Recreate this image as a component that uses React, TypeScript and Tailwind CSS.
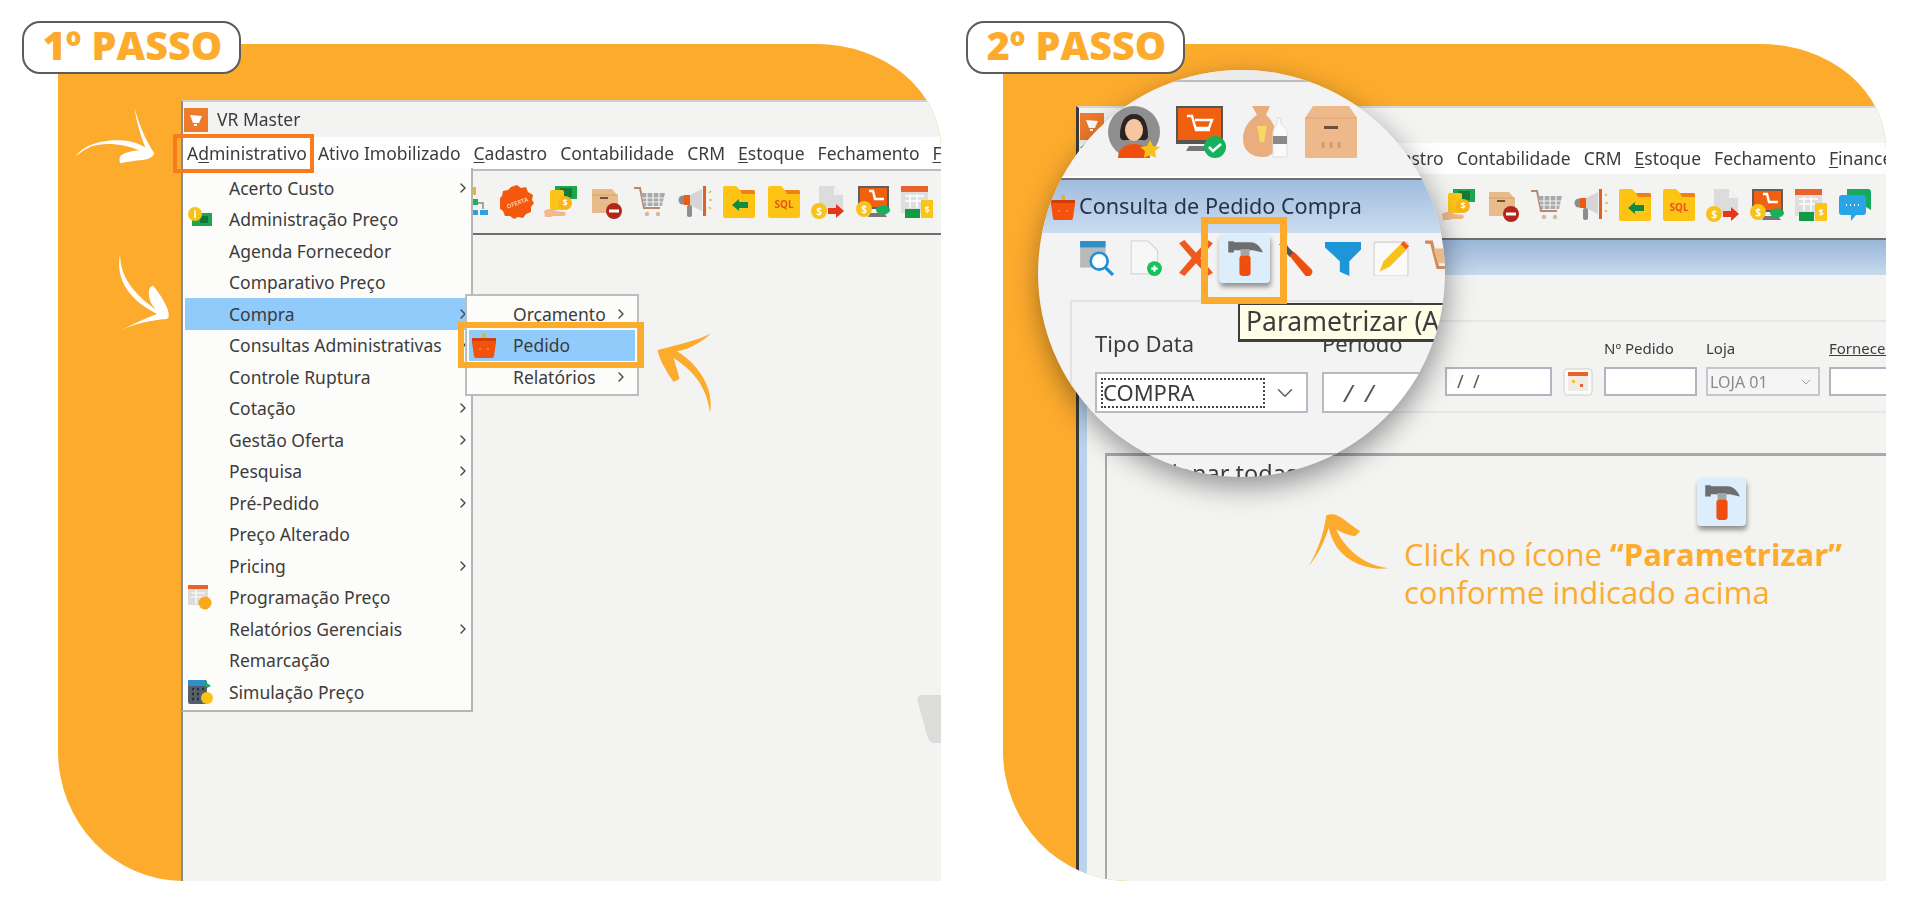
import { ChevronDown, ChevronRight } from "lucide-react";
import type { ReactNode } from "react";

const ORANGE = "#fcab2d";

function Ic({ children, size = 34, box = 34 }: { children: ReactNode; size?: number; box?: number }) {
  return (
    <svg width={size} height={size} viewBox={`0 0 ${box} ${box}`} className="shrink-0 blur-[0.5px]">
      {children}
    </svg>
  );
}

// toolbar icons, shared by both windows
const Network = () => (
  <Ic>
    <rect x="12" y="2" width="9" height="8" fill="#fbb11f" />
    <path d="M17 10v8M6 24v-6h22v6" stroke="#8a8a8a" strokeWidth="1.5" fill="none" />
    <rect x="11" y="14" width="12" height="6" fill="#19b45a" />
    <rect x="1" y="25" width="10" height="5" fill="#2f9fe0" />
    <rect x="13" y="25" width="10" height="5" fill="#2f9fe0" />
    <rect x="25" y="25" width="8" height="5" fill="#2f9fe0" />
  </Ic>
);
const Oferta = () => (
  <Ic>
    <path d="M17 0l4 3 5-1 2 5 5 3-1 5 2 3-3 4 0 5-5 2-3 4-5-1-4 2-4-3-5 0-2-5-4-3 1-5-1-4 3-3 1-5 5-1 3-3z" fill="#f3580f" />
    <text x="17" y="20" textAnchor="middle" fontSize="6" fill="#ffc9a0" transform="rotate(-20 17 17)" fontFamily="Noto Sans, sans-serif" fontWeight="700">OFERTA</text>
  </Ic>
);
const MoneyHand = () => (
  <Ic>
    <rect x="11" y="1" width="22" height="13" fill="#1ea54d" />
    <rect x="16" y="3" width="12" height="9" fill="#137a37" />
    <rect x="6" y="5" width="14" height="20" rx="2" fill="#fcc419" />
    <circle cx="21" cy="18" r="7" fill="#f9b41a" />
    <text x="21" y="21" textAnchor="middle" fontSize="9" fill="#fff" fontFamily="Noto Sans, sans-serif" fontWeight="700">$</text>
    <path d="M0 26c5-3 9-2 12 0l9 1c2 2 0 4-2 4H9l-2 1H1z" fill="#f2b98b" />
  </Ic>
);
const BoxMinus = () => (
  <Ic>
    <path d="M3 4h20l6 7v17H3z" fill="#e9bb8b" />
    <path d="M3 10h26" stroke="#d5a171" strokeWidth="1" />
    <rect x="11" y="12" width="8" height="2" fill="#6b5140" />
    <circle cx="25" cy="26" r="8" fill="#b3261a" />
    <rect x="20" y="24.5" width="10" height="3" fill="#fff" />
  </Ic>
);
const Cart = () => (
  <Ic>
    <path d="M1 3h6l4 20h16" stroke="#b9886a" strokeWidth="2" fill="none" />
    <path d="M8 8h24l-3 13H11z" fill="#a9a9a9" />
    <path d="M14 8v13M20 8v13M26 8v13M9 13h22M10 17h20" stroke="#f3f3f3" strokeWidth="1.2" />
    <circle cx="14" cy="29" r="2.2" fill="#d6b8a0" />
    <circle cx="25" cy="29" r="2.2" fill="#d6b8a0" />
  </Ic>
);
const Megaphone = () => (
  <Ic>
    <circle cx="5" cy="15" r="4.5" fill="#8d8d8d" />
    <path d="M6 10h6v10H6z" fill="#ef5a12" />
    <path d="M12 10l12-6v22l-12-6z" fill="#d5d5d5" />
    <rect x="9" y="20" width="5" height="12" rx="2" fill="#8d8d8d" />
    <rect x="25" y="1" width="3" height="30" fill="#d9622a" />
    <path d="M31 8l2-2M31 15h3M31 22l2 2" stroke="#f7b731" strokeWidth="1.6" />
  </Ic>
);
function Folder({ children }: { children: ReactNode }) {
  return (
    <Ic>
      <path d="M1 3a2 2 0 012-2h11l4 4h13a2 2 0 012 2v24a2 2 0 01-2 2H3a2 2 0 01-2-2z" fill="#fdc414" />
      <path d="M18 5h13a2 2 0 012 2v2H20z" fill="#ef7f1a" />
      {children}
    </Ic>
  );
}
const FolderArrow = () => (
  <Folder>
    <path d="M10 20l7-6v3h9v6h-9v3z" fill="#118a43" />
  </Folder>
);
const FolderSql = () => (
  <Folder>
    <text x="17" y="23" textAnchor="middle" fontSize="10" fill="#e8541a" fontFamily="Noto Sans, sans-serif" fontWeight="700">SQL</text>
  </Folder>
);
const DocMoney = () => (
  <Ic>
    <path d="M8 1h15l9 9v16H8z" fill="#dcdcdc" />
    <path d="M23 1v9h9z" fill="#f1f1f1" />
    <circle cx="8" cy="26" r="8" fill="#f9c21a" />
    <text x="8" y="30" textAnchor="middle" fontSize="10" fill="#fff" fontFamily="Noto Sans, sans-serif" fontWeight="700">$</text>
    <path d="M17 23h8v-4l8 7-8 7v-4h-8z" fill="#e4361b" />
  </Ic>
);
const MonitorMoney = () => (
  <Ic>
    <rect x="2" y="1" width="31" height="23" fill="#5f5f5f" />
    <rect x="4" y="3" width="27" height="19" fill="#f0600f" />
    <path d="M13 6h4l2 8h9" stroke="#fff" strokeWidth="2.4" fill="none" />
    <path d="M14 28h14l3 4H12z" fill="#777" />
    <circle cx="8" cy="24" r="8" fill="#f9c21a" />
    <text x="8" y="28" textAnchor="middle" fontSize="10" fill="#fff" fontFamily="Noto Sans, sans-serif" fontWeight="700">$</text>
    <ellipse cx="27" cy="25" rx="7" ry="4.5" fill="#14b25a" />
  </Ic>
);
const CalendarMoney = () => (
  <Ic>
    <rect x="1" y="1" width="27" height="27" fill="#dedede" />
    <rect x="1" y="1" width="27" height="6" fill="#e8622a" />
    <path d="M5 11h19M5 16h19M10 9v14M17 9v14" stroke="#fff" strokeWidth="1.5" />
    <rect x="5" y="24" width="15" height="9" fill="#129a45" />
    <rect x="21" y="15" width="12" height="18" fill="#fcc419" />
    <text x="27" y="28" textAnchor="middle" fontSize="9" fill="#fff" fontFamily="Noto Sans, sans-serif" fontWeight="700">$</text>
  </Ic>
);
const Chat = () => (
  <Ic>
    <path d="M9 1h21a3 3 0 013 3v18l-5-3H9z" fill="#16a960" />
    <path d="M1 10a3 3 0 013-3h21a3 3 0 013 3v14a3 3 0 01-3 3H18l-5 6v-6H4a3 3 0 01-3-3z" fill="#27a5e6" />
    <path d="M8 17h1M12 17h1M16 17h1M20 17h1" stroke="#fff" strokeWidth="2.2" />
  </Ic>
);

// window icon, orange tile with a white cart
const VrLogo = ({ green = false }: { green?: boolean }) => (
  <svg width="24" height={green ? 35 : 24} viewBox={green ? "0 0 24 35" : "0 0 24 24"} className="shrink-0 blur-[0.4px]">
    <rect width="24" height={green ? 27 : 24} fill="#ee7a2c" />
    <path d="M6 7l12 1-3 7h-6z" fill="#fff" />
    <rect x="10" y="16" width="3" height="2" fill="#fff" />
    {green && <path d="M0 35l14-13v13z" fill="#1c9a4d" />}
  </svg>
);
const Basket = ({ size = 26 }: { size?: number }) => (
  <Ic size={size} box={26}>
    <rect x="11" y="1" width="4" height="5" fill="#e3b23a" />
    <path d="M1 6h24v4l-2 14a2 2 0 01-2 2H5a2 2 0 01-2-2L1 10z" fill="#f4510c" />
    <path d="M1 6h24v3H1z" fill="#cf3e08" />
    <circle cx="9" cy="17" r="1" fill="#ff8a50" />
    <circle cx="17" cy="17" r="1" fill="#ff8a50" />
  </Ic>
);
const CoinBill = () => (
  <Ic size={26} box={26}>
    <rect x="5" y="7" width="20" height="13" fill="#1fa54c" />
    <rect x="13" y="10" width="8" height="7" fill="#0f7a35" />
    <circle cx="8" cy="8" r="7" fill="#f9c21a" />
    <rect x="7" y="4" width="2" height="8" fill="#fff3c0" />
  </Ic>
);
const CalendarCoin = () => (
  <Ic size={26} box={26}>
    <rect x="1" y="1" width="20" height="20" fill="#dcdcdc" />
    <rect x="1" y="1" width="20" height="4" fill="#e8622a" />
    <path d="M4 9h14M4 13h14M9 6v14" stroke="#fff" strokeWidth="1.2" />
    <circle cx="18" cy="19" r="6.5" fill="#f9a81a" />
  </Ic>
);
const CalcCoin = () => (
  <Ic size={26} box={26}>
    <rect x="1" y="1" width="19" height="24" rx="2" fill="#55606a" />
    <rect x="1" y="1" width="17" height="6" fill="#2e8fc8" />
    <path d="M5 10h2M10 10h2M15 10h2M5 15h2M10 15h2M5 20h2M10 20h2" stroke="#2a2f35" strokeWidth="2.4" />
    <path d="M16 1l8 6-4 2z" fill="#16b35d" />
    <circle cx="20" cy="19" r="6" fill="#f9c21a" />
  </Ic>
);

const HammerGlyph = ({ size }: { size: number }) => (
  <Ic size={size} box={34}>
    <path d="M2 2h5v1h15c5 0 9 4 11 9l-9-2H7v2H2z" fill="#6e6e6e" />
    <rect x="13" y="9" width="8" height="7" fill="#a5a5a5" />
    <rect x="12" y="15" width="10" height="18" rx="2.5" fill="#ee4f10" />
  </Ic>
);
const HammerBtn = ({ w, h, glyph }: { w: string; h: string; glyph: number }) => (
  <div className={`flex ${w} ${h} shrink-0 items-center justify-center rounded-[4px] bg-[#dceefb] shadow-[1px_4px_5px_rgba(0,0,0,0.4)]`}>
    <HammerGlyph size={glyph} />
  </div>
);

const MENU: { label: string; arrow?: boolean; icon?: ReactNode; active?: boolean }[] = [
  { label: "Acerto Custo", arrow: true },
  { label: "Administração Preço", icon: <CoinBill /> },
  { label: "Agenda Fornecedor" },
  { label: "Comparativo Preço" },
  { label: "Compra", arrow: true, active: true },
  { label: "Consultas Administrativas", arrow: true },
  { label: "Controle Ruptura" },
  { label: "Cotação", arrow: true },
  { label: "Gestão Oferta", arrow: true },
  { label: "Pesquisa", arrow: true },
  { label: "Pré-Pedido", arrow: true },
  { label: "Preço Alterado" },
  { label: "Pricing", arrow: true },
  { label: "Programação Preço", icon: <CalendarCoin /> },
  { label: "Relatórios Gerenciais", arrow: true },
  { label: "Remarcação" },
  { label: "Simulação Preço", icon: <CalcCoin /> },
];

function U({ first, rest }: { first: string; rest: string }) {
  return (
    <span>
      <span className="underline underline-offset-2">{first}</span>
      {rest}
    </span>
  );
}

function Badge({ text, className }: { text: string; className: string }) {
  return (
    <div className={`absolute top-[-23px] z-30 flex h-[53px] w-[219px] items-center justify-center rounded-[18px] border-2 border-[#5c5c5c] bg-white pb-[4px] pl-[2px] font-['Open_Sans',sans-serif] text-[39.5px] font-extrabold text-[#fcab2d] ${className}`}>
      {text}
    </div>
  );
}

function Arrow({ box, w, h, d, fill, className }: { box: string; w: number; h: number; d: string; fill: string; className: string }) {
  return (
    <svg width={w} height={h} viewBox={box} className={`absolute z-20 ${className}`}>
      <path d={d} fill={fill} />
    </svg>
  );
}

function StepOne() {
  return (
    <div className="relative h-[837px] w-[883px] shrink-0">
      <Badge text="1º PASSO" className="left-[-36px]" />
      <Arrow box="40 15 250 180" w={83} h={60} fill="#fff" className="left-[15px] top-[61px]"
        d="M48 170 C70 135 130 115 200 122 C225 125 245 135 258 142 C245 110 232 70 225 22 C238 70 258 120 285 160 C280 172 270 178 250 180 C225 182 200 186 182 190 C178 180 180 170 186 165 C205 155 225 152 240 152 C200 132 130 125 95 140 C75 148 60 160 48 170 Z" />
      <Arrow box="165 455 170 245" w={57} h={82} fill="#fff" className="left-[57px] top-[208px]"
        d="M180 462 C168 520 190 590 290 640 C250 655 210 675 175 692 C215 672 270 658 320 655 C328 650 326 640 322 625 C312 600 295 575 278 555 C268 560 263 568 268 595 C272 610 280 620 288 628 C235 590 180 540 180 462 Z" />
      <div className="flex h-full flex-col overflow-hidden rounded-tr-[125px_105px] rounded-bl-[125px_130px] bg-[#fcab2d] pl-[123px] pt-[56px]">
        <div className="relative flex min-h-0 flex-1 flex-col border-l-2 border-t-2 border-[#8b8b8b] border-t-[#cfcfcf] bg-[#f3f3f2] font-['Noto_Sans',sans-serif] text-[17.5px] text-[#3c3c3c] blur-[0.3px]">
          <div className="flex h-[35px] items-center gap-[9px] pl-[1px]">
            <VrLogo />
            <span>VR Master</span>
          </div>
          <div className="flex h-[32px] items-center gap-[13px] whitespace-nowrap bg-[#fefefe] pl-[4px]">
            <span>A<U first="d" rest="ministrativo" /></span>
            <span className="ml-[-2px]">Ativo Imobilizado</span>
            <U first="C" rest="adastro" />
            <span>Contabilidade</span>
            <span>CRM</span>
            <U first="E" rest="stoque" />
            <span>Fechamento</span>
            <U first="F" rest="inanceiro" />
          </div>
          <div className="flex h-[66px] items-center gap-[10.5px] border-b-2 border-t-2 border-b-[#6f6f6f] border-t-[#bdbdbd] pl-[272px]">
            <Network />
            <Oferta />
            <MoneyHand />
            <BoxMinus />
            <Cart />
            <Megaphone />
            <FolderArrow />
            <FolderSql />
            <DocMoney />
            <MonitorMoney />
            <CalendarMoney />
          </div>
          <div className="flex-1" />

          {/* menu aberto */}
          <div className="absolute left-[-2px] top-[66px] z-10 w-[292px] border-b-2 border-l-2 border-r-2 border-[#b5b5b5] border-l-[#8b8b8b] bg-[#fcfcfb] pb-[2px] pl-[2px] pr-[2px] pt-[4px]">
            {MENU.map((m) => (
              <div key={m.label} className={`flex h-[31.5px] items-center ${m.active ? "bg-[#90cbfb]" : ""}`}>
                <div className="flex w-[44px] shrink-0 items-center pl-[2px]">{m.icon}</div>
                <span className="flex-1 whitespace-nowrap">{m.label}</span>
                {m.arrow && <ChevronRight size={16} strokeWidth={2} className="mr-[-2px] text-[#444]" />}
              </div>
            ))}
          </div>
          <div className="absolute left-[282px] top-[192px] z-10 w-[174px] border-2 border-[#bdbdbd] bg-[#fcfcfb] pb-[1px] pt-[2px]">
            <div className="flex h-[31.5px] items-center pl-[46px] pr-[8px]">
              <span className="flex-1">Orçamento</span>
              <ChevronRight size={16} strokeWidth={2} className="text-[#444]" />
            </div>
            <div className="mx-[2px] flex h-[31.5px] items-center bg-[#90cbfb] pl-[44px]">
              <span>Pedido</span>
            </div>
            <div className="flex h-[31.5px] items-center pl-[46px] pr-[8px]">
              <span className="flex-1">Relatórios</span>
              <ChevronRight size={16} strokeWidth={2} className="text-[#444]" />
            </div>
            <div className="absolute left-[4px] top-[36px] z-10">
              <Basket size={26} />
            </div>
          </div>
          {/* destaques */}
          <div className="absolute left-[-10px] top-[32px] z-20 h-[39px] w-[141px] border-4 border-[#f97b1f]" />
          <div className="absolute left-[275px] top-[220px] z-20 h-[46px] w-[186px] border-[6px] border-[#fcab2d]" />
          {/* marca d'agua */}
          <svg width="24" height="48" viewBox="0 0 24 48" className="absolute right-0 top-[593px]">
            <path d="M0 4c0-3 3-4 6-4h18v48h-8c-3-1-5-4-6-8z" fill="#dcdcdb" />
          </svg>
          <Arrow box="50 35 175 245" w={58} h={82} fill={ORANGE} className="left-[474px] top-[230px]"
            d="M213 38 C170 60 110 72 52 88 C55 110 70 140 100 185 L118 175 C112 150 105 130 100 112 C150 145 200 190 210 278 C222 220 190 140 110 92 C150 85 190 60 213 38 Z" />
        </div>
      </div>
    </div>
  );
}

function Magnifier() {
  return (
    <div className="absolute left-[35px] top-[26px] z-10 h-[407px] w-[407px] overflow-hidden rounded-full bg-[#f3f3f3] font-['Noto_Sans',sans-serif] text-[#3c3c3c] shadow-[2px_10px_28px_rgba(0,0,0,0.4)]">
      <div className="h-[12px] border-b-2 border-[#bdbdbd] bg-[#ececec]" />
      <div className="flex h-[94px] items-center gap-[15px] pl-[70px] pt-[6px] blur-[0.5px]">
        <svg width="52" height="52" viewBox="0 0 52 52" className="shrink-0">
          <circle cx="26" cy="26" r="26" fill="#8f8f8f" />
          <path d="M12 30c0-14 5-22 14-22s14 8 14 22c0 4-4 5-6 4H18c-2 1-6 0-6-4z" fill="#2b2422" />
          <ellipse cx="26" cy="24" rx="9" ry="11" fill="#f6c6a0" />
          <path d="M10 52c0-10 8-14 16-14s16 4 16 14z" fill="#ee4f10" />
          <path d="M42 34l3 6 7 1-5 4 1 7-6-3-6 3 1-7-5-4 7-1z" fill="#f9c21a" />
        </svg>
        <svg width="52" height="52" viewBox="0 0 52 52" className="shrink-0">
          <rect x="1" y="0" width="47" height="38" fill="#555" />
          <rect x="3" y="2" width="43" height="32" fill="#f0600f" />
          <path d="M12 10h5l4 14h14M20 14h17l-3 8H21" stroke="#fff" strokeWidth="2.5" fill="none" />
          <path d="M14 40h20l3 5H11z" fill="#777" />
          <circle cx="40" cy="41" r="11" fill="#14b25a" />
          <path d="M34 41l4 4 8-7" stroke="#fff" strokeWidth="2.6" fill="none" />
        </svg>
        <svg width="50" height="52" viewBox="0 0 50 52" className="shrink-0">
          <path d="M10 0h18l-4 9c9 8 12 18 10 30-1 8-6 12-13 12C10 51 1 45 1 33 1 23 6 15 15 9z" fill="#e9ad7e" />
          <path d="M15 20h10l-3 16h-4z" fill="#f7d860" />
          <path d="M35 12h4v6c4 3 6 5 6 9v24H31V27c0-4 2-6 4-9z" fill="#fafafa" stroke="#dedede" />
          <rect x="31" y="30" width="14" height="8" fill="#8a8a8a" />
        </svg>
        <svg width="52" height="52" viewBox="0 0 52 52" className="shrink-0 -ml-[2px]">
          <path d="M8 0h36l8 12v40H0V12z" fill="#eeb98a" />
          <path d="M0 12h52" stroke="#dba577" strokeWidth="1" />
          <rect x="19" y="20" width="14" height="3" fill="#6b5140" />
          <path d="M18 36v6M26 36v6M34 36v6" stroke="#d39b6c" strokeWidth="3" />
        </svg>
      </div>
      <div className="h-[2px] bg-white" />
      <div className="h-[2px] bg-[#6f6f6f]" />
      <div className="flex h-[53px] items-center gap-[3px] whitespace-nowrap bg-gradient-to-b from-[#9fbcdd] to-[#cbdcf0] pl-[12px] text-[21.6px] text-[#26324a]">
        <Basket size={26} />
        <span className="blur-[0.5px]">Consulta de Pedido Compra</span>
      </div>
      <div className="flex h-[46px] items-center gap-[14px] pl-[40px] pt-[4px]">
        <Ic size={36}>
          <rect x="2" y="1" width="24" height="25" fill="#b9b9b9" />
          <rect x="2" y="1" width="24" height="6" fill="#2e8fc8" />
          <circle cx="20" cy="20" r="8" fill="#fff" stroke="#1f8fd6" strokeWidth="2.5" />
          <path d="M26 26l7 7" stroke="#1f8fd6" strokeWidth="3" />
        </Ic>
        <Ic size={36}>
          <path d="M3 1h16l9 9v22H3z" fill="#f7f7f7" stroke="#d4d4d4" />
          <circle cx="25" cy="27" r="7" fill="#14c25a" />
          <path d="M22 27h6M25 24v6" stroke="#fff" strokeWidth="2" />
        </Ic>
        <Ic size={36}>
          <path d="M1 3l5-3 11 12 11-12 5 3-12 14 12 14-5 3-11-12-11 12-5-3 12-14z" fill="#ee5a1c" />
        </Ic>
        <div className="ml-[-9px]">
          <HammerBtn w="w-[51px]" h="h-[49px]" glyph={38} />
        </div>
        <div className="ml-[-7px]">
          <Ic size={36}>
            <path d="M2 4l5-3 4 6 5 5-4 4-6-7z" fill="#555" />
            <path d="M12 15l4-4 17 17c2 4-3 8-6 6z" fill="#ee4f10" />
          </Ic>
        </div>
        <div className="ml-[-2px]">
          <Ic size={36}>
            <path d="M0 2h36v5L23 20v14l-9-4V20L0 7z" fill="#1d96d8" />
          </Ic>
        </div>
        <div className="ml-[-2px]">
          <Ic size={36}>
            <rect x="1" y="2" width="32" height="32" rx="2" fill="#fafafa" stroke="#cfcfcf" />
            <path d="M6 30l4-10 16-16 6 5-16 16z" fill="#f9c21a" />
            <path d="M26 4l3-3 5 5-3 3z" fill="#ee5a1c" />
          </Ic>
        </div>
        <Ic size={36}>
          <path d="M2 2h6l6 24h12" stroke="#cf8a58" strokeWidth="3" fill="none" />
          <path d="M10 8h22l-4 14H14z" fill="#e9b98a" />
        </Ic>
      </div>
      <div className="mx-[32px] mt-[21px] border-l-2 border-t-2 border-[#e2e2e2] pl-[23px] pt-[26px]">
        <div className="flex gap-[14px]">
          <div className="w-[213px] shrink-0 text-[22px] leading-[30px] blur-[0.4px]">Tipo Data</div>
          <div className="text-[22px] leading-[30px] blur-[0.4px]">Período</div>
        </div>
        <div className="mt-[14px] flex gap-[14px] blur-[0.4px]">
          <div className="flex h-[41px] w-[213px] shrink-0 items-center border-2 border-[#b9b9c4] bg-white pl-[4px] pr-[8px]">
            <div className="flex h-[30px] flex-1 items-center border-2 border-dotted border-[#444] text-[22px]">COMPRA</div>
            <ChevronDown size={26} strokeWidth={1.5} className="ml-[7px] text-[#666]" />
          </div>
          <div className="flex h-[41px] w-[120px] shrink-0 items-center whitespace-pre border-2 border-[#b9b9c4] bg-white pl-[20px] text-[24px] italic text-[#555]">
            {"/  /"}
          </div>
        </div>
      </div>
      <div className="ml-[67px] mt-[40px] whitespace-nowrap border-l-2 border-t-2 border-[#a8a8a8] pl-[8px] pt-[1px] text-[23.5px] blur-[0.4px]">
        Selecionar todas
      </div>

      {/* tooltip e destaque */}
      <div className="absolute left-[200px] top-[233px] flex h-[39px] w-[220px] items-center whitespace-nowrap border-2 border-b-[3px] border-[#3e3e3e] border-r-0 bg-[#fffde6] pl-[6px] text-[26.5px] blur-[0.3px]">
        Parametrizar (A
      </div>
      <div className="absolute left-[163px] top-[147px] h-[87px] w-[86px] border-[7px] border-[#fcab2d]" />
    </div>
  );
}

function StepTwo() {
  const labelRow = "mb-[10px] text-[15px] leading-[18px] blur-[0.3px]";
  return (
    <div className="relative h-[837px] w-[883px] shrink-0">
      <Badge text="2º PASSO" className="left-[-37px]" />
      <div className="flex h-full flex-col overflow-hidden rounded-tr-[125px_105px] rounded-bl-[125px_130px] bg-[#fcab2d] pl-[73px] pt-[62px]">
        <div className="flex min-h-0 flex-1 flex-col border-l-[3px] border-t-2 border-[#3a3a3a] border-t-[#d9d9d9] bg-[#f3f3f2] font-['Noto_Sans',sans-serif] text-[17.5px] text-[#3c3c3c] blur-[0.3px]">
          <div className="flex h-[35px] items-start pl-[1px] pt-[5px]">
            <VrLogo green />
          </div>
          <div className="flex h-[31px] items-center gap-[13px] whitespace-nowrap bg-[#fefefe] pl-[291px]">
            <span>Cadastro</span>
            <span>Contabilidade</span>
            <span>CRM</span>
            <U first="E" rest="stoque" />
            <span>Fechamento</span>
            <U first="F" rest="inanceiro" />
          </div>
          <div className="flex h-[66px] items-center gap-[10px] border-b-2 border-[#6f6f6f] pb-[2px] pl-[363px]">
            <MoneyHand />
            <BoxMinus />
            <Cart />
            <Megaphone />
            <FolderArrow />
            <FolderSql />
            <DocMoney />
            <MonitorMoney />
            <CalendarMoney />
            <Chat />
          </div>
          <div className="h-[35px] bg-gradient-to-b from-[#9ab6d8] to-[#c7daef]" />
          <div className="flex min-h-0 flex-1">
            <div className="w-[8px] shrink-0 bg-[#b9d4ec]" />
            <div className="min-w-0 flex-1 pl-[18px] pt-[45px]">
              <div className="h-[93px] border-b-2 border-t-2 border-[#e6e6e6] pl-[340px] pt-[17px]">
                <div className="flex gap-[11px] whitespace-nowrap">
                  <div className="w-[107px] shrink-0">
                    <div className="h-[28px]" />
                    <div className="flex h-[29px] items-center whitespace-pre border-2 border-[#b4b4c0] bg-white pl-[10px] text-[18px] text-[#555]">{"/  /"}</div>
                  </div>
                  <div className="flex h-[57px] w-[30px] shrink-0 items-end">
                    <svg width="30" height="28" viewBox="0 0 30 28" className="blur-[0.3px]">
                      <rect x="1" y="1" width="28" height="26" rx="3" fill="#fafafa" stroke="#d0d0d0" />
                      <rect x="5" y="4" width="20" height="4" fill="#e8622a" />
                      <rect x="5" y="8" width="20" height="15" fill="#f1ece2" />
                      <rect x="9" y="12" width="3" height="3" fill="#f3c04a" />
                      <rect x="17" y="16" width="3" height="3" fill="#e8622a" />
                    </svg>
                  </div>
                  <div className="w-[93px] shrink-0">
                    <div className={labelRow}>Nº Pedido</div>
                    <div className="h-[29px] border-2 border-[#b4b4c0] bg-white" />
                  </div>
                  <div className="ml-[-2px] w-[114px] shrink-0">
                    <div className={labelRow}>Loja</div>
                    <div className="flex h-[29px] items-center justify-between border-2 border-[#c6c6ce] bg-[#f5f5f5] pl-[2px] pr-[4px] text-[16px] text-[#8a8a8a]">
                      LOJA 01
                      <ChevronDown size={16} strokeWidth={1.2} />
                    </div>
                  </div>
                  <div className="ml-[-2px] w-[80px] shrink-0">
                    <div className={labelRow}><span className="underline">Fornecedor</span></div>
                    <div className="h-[29px] border-2 border-[#b4b4c0] bg-white" />
                  </div>
                </div>
              </div>
              <div className="mt-[40px] h-full border-l-2 border-t-[3px] border-[#a8a8a8]" />
            </div>
          </div>
        </div>
      </div>
      <Magnifier />
      <div className="absolute left-[694px] top-[434px] z-10">
        <HammerBtn w="w-[49px]" h="h-[48px]" glyph={38} />
      </div>
      <Arrow box="20 25 250 175" w={83} h={58} fill={ORANGE} className="left-[304px] top-[469px]"
        d="M25 185 C55 135 70 85 78 32 C95 25 110 30 125 40 C145 55 165 70 180 80 L165 95 C145 92 125 85 108 75 C125 115 175 180 265 192 C215 198 150 180 115 135 C100 115 92 95 85 70 C72 115 50 155 25 185 Z" />
      <div className="absolute left-[401px] top-[491px] z-10 whitespace-nowrap font-['Open_Sans',sans-serif] text-[31px] leading-[38px] text-[#fcab2d]">
        <div>Click no ícone <b>“Parametrizar”</b></div>
        <div>conforme indicado acima</div>
      </div>
    </div>
  );
}

export default function App() {
  return (
    <div className="flex h-[922px] w-[1920px] gap-[62px] overflow-hidden bg-white pl-[58px] pt-[44px]">
      <StepOne />
      <StepTwo />
    </div>
  );
}
